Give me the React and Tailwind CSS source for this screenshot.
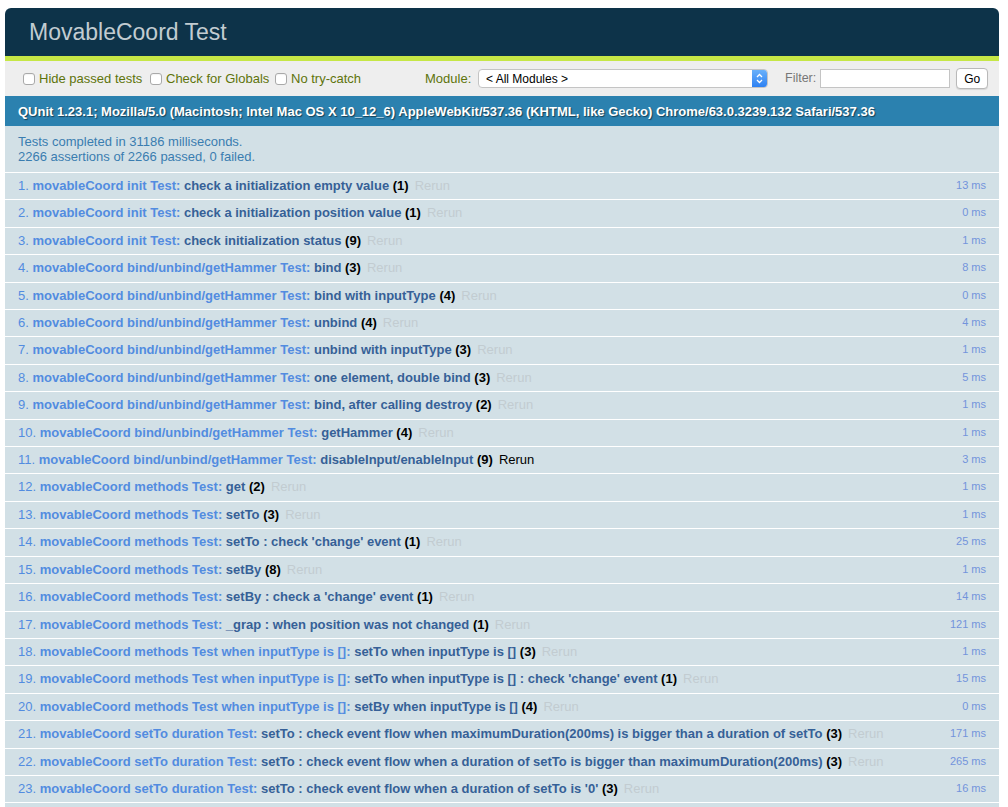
import React from 'react';

const tests = [
  ['movableCoord init Test', 'check a initialization empty value', 1, 13],
  ['movableCoord init Test', 'check a initialization position value', 1, 0],
  ['movableCoord init Test', 'check initialization status', 9, 1],
  ['movableCoord bind/unbind/getHammer Test', 'bind', 3, 8],
  ['movableCoord bind/unbind/getHammer Test', 'bind with inputType', 4, 0],
  ['movableCoord bind/unbind/getHammer Test', 'unbind', 4, 4],
  ['movableCoord bind/unbind/getHammer Test', 'unbind with inputType', 3, 1],
  ['movableCoord bind/unbind/getHammer Test', 'one element, double bind', 3, 5],
  ['movableCoord bind/unbind/getHammer Test', 'bind, after calling destroy', 2, 1],
  ['movableCoord bind/unbind/getHammer Test', 'getHammer', 4, 1],
  ['movableCoord bind/unbind/getHammer Test', 'disableInput/enableInput', 9, 3],
  ['movableCoord methods Test', 'get', 2, 1],
  ['movableCoord methods Test', 'setTo', 3, 1],
  ['movableCoord methods Test', "setTo : check 'change' event", 1, 25],
  ['movableCoord methods Test', 'setBy', 8, 1],
  ['movableCoord methods Test', "setBy : check a 'change' event", 1, 14],
  ['movableCoord methods Test', '_grap : when position was not changed', 1, 121],
  ['movableCoord methods Test when inputType is []', 'setTo when inputType is []', 3, 1],
  ['movableCoord methods Test when inputType is []', "setTo when inputType is [] : check 'change' event", 1, 15],
  ['movableCoord methods Test when inputType is []', 'setBy when inputType is []', 4, 0],
  ['movableCoord setTo duration Test', 'setTo : check event flow when maximumDuration(200ms) is bigger than a duration of setTo', 3, 171],
  ['movableCoord setTo duration Test', 'setTo : check event flow when a duration of setTo is bigger than maximumDuration(200ms)', 3, 265],
  ['movableCoord setTo duration Test', "setTo : check event flow when a duration of setTo is '0'", 3, 16],
];

function Check({ label, className }) {
  return (
    <label className={`flex items-center gap-[4px] whitespace-nowrap shrink-0 ${className}`}>
      <span className="w-[12px] h-[12px] rounded-[3px] border border-[#a9a9a9] bg-white shadow-[inset_0_1px_1px_rgba(0,0,0,0.05)]" />
      <span>{label}</span>
    </label>
  );
}

export default function App() {
  return (
    <div className="pt-[8px] pl-[5px] pr-[9px] bg-white min-h-[807px] font-['Liberation_Sans',Arial,sans-serif]">
      {/* header */}
      <h1 className="bg-[#0d3349] rounded-t-[6px] text-[#c2ccd1] text-[23px] leading-[24px] font-normal py-[12px] pl-[24px]">
        MovableCoord Test
      </h1>
      <div className="h-[5px] bg-[#c6e746]" />

      {/* toolbar */}
      <div className="bg-[#eeeeee] text-[#5e740b] text-[13px] h-[35px] flex items-center pl-[18px] whitespace-nowrap">
        <Check label="Hide passed tests" className="w-[127px]" />
        <Check label="Check for Globals" className="w-[125px]" />
        <Check label="No try-catch" className="w-[150px]" />
        <span className="w-[53px]">Module:</span>
        <div className="w-[290px] h-[19px] bg-white border border-[#c4c4c4] rounded-[4px] flex items-center justify-between text-black text-[12px] pl-[7px] overflow-hidden shrink-0">
          <span>&lt; All Modules &gt;</span>
          <span className="w-[15px] h-[19px] bg-gradient-to-b from-[#6cb3fa] to-[#2a7ef2] rounded-r-[4px] flex flex-col items-center justify-center">
            <svg width="7" height="11" viewBox="0 0 7 11" fill="none" stroke="white" strokeWidth="1.3">
              <path d="M1 4 L3.5 1.5 L6 4" />
              <path d="M1 7 L3.5 9.5 L6 7" />
            </svg>
          </span>
        </div>
        <span className="ml-[17px] mr-[4px] text-[#777] text-[12.5px]">Filter:</span>
        <div className="w-[130px] h-[19px] bg-white border border-[#c4c4c4] shrink-0" />
        <button className="ml-[6px] h-[21px] px-[7px] bg-white border border-[#b9b9b9] rounded-[4px] text-black text-[12px] leading-none shadow-[0_1px_1px_rgba(0,0,0,0.1)]">
          Go
        </button>
      </div>

      {/* user agent */}
      <div className="bg-[#2b81af] text-white font-bold text-[13px] leading-[15px] py-[7.5px] px-[13px] [text-shadow:1px_1px_1px_rgba(0,0,0,0.5)]">
        QUnit 1.23.1; Mozilla/5.0 (Macintosh; Intel Mac OS X 10_12_6) AppleWebKit/537.36 (KHTML, like Gecko) Chrome/63.0.3239.132 Safari/537.36
      </div>

      {/* result */}
      <div className="bg-[#d2e0e6] text-[#3a7db0] text-[13px] leading-[15px] pt-[8px] pb-[8px] px-[13px] border-b border-white">
        <div>Tests completed in 31186 milliseconds.</div>
        <div>2266 assertions of 2266 passed, 0 failed.</div>
      </div>

      {/* tests */}
      <ol className="list-none">
        {tests.map(([mod, name, count, ms], i) => (
          <li
            key={i}
            className="bg-[#d2e0e6] border-b border-white py-[5px] pl-[13px] pr-[13px] text-[13px] leading-[16.4px] text-[#528ce0] whitespace-nowrap"
          >
            <span className="float-right text-[11px] leading-[12px] mt-[1px] text-[#7394dc]">{ms} ms</span>
            <span>{i + 1}. </span>
            <strong>
              <span className="text-[#528ce0]">{mod}:</span>{' '}
              <span className="text-[#366097]">{name}</span>{' '}
              <b className="text-black">({count})</b>
            </strong>
            <a className={`pl-[6px] ${i === 10 ? 'text-black' : 'text-[#c2ccd1]'}`}>Rerun</a>
          </li>
        ))}
        <li className="bg-[#d2e0e6] h-[27px]" />
      </ol>
    </div>
  );
}
